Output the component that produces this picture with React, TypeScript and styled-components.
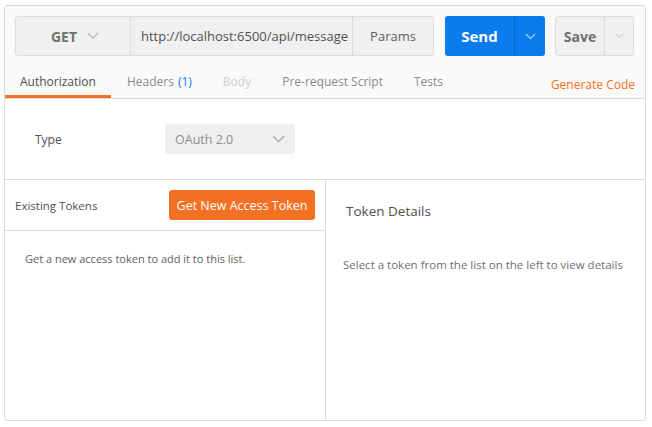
import React from 'react';
import styled, { createGlobalStyle } from 'styled-components';

const GlobalStyle = createGlobalStyle`
  html, body {
    margin: 0;
    padding: 0;
    background: #ffffff;
  }
  body {
    font-family: "Open Sans", "Liberation Sans", sans-serif;
    color: #505050;
  }
`;

const colors = {
  border: '#dcdcdc',
  panel: '#fafafa',
  field: '#f0f0f0',
  blue: '#097bed',
  blueDark: '#0a66c2',
  orange: '#f47023',
  text: '#505050',
  muted: '#808080',
};

const Chevron = ({ color, size = 12 }: { color: string; size?: number }) => (
  <svg width={size} height={size * 0.6} viewBox="0 0 12 7" fill="none">
    <path d="M1 1l5 5 5-5" stroke={color} strokeWidth="1.2" />
  </svg>
);

const tabs = [
  { label: 'Authorization', active: true },
  { label: 'Headers', count: 1 },
  { label: 'Body', disabled: true },
  { label: 'Pre-request Script' },
  { label: 'Tests' },
];

const App = (): JSX.Element => (
  <>
    <GlobalStyle />
    <Panel>
      <Header>
        <Toolbar>
          <RequestGroup>
            <Method>
              GET <Chevron color="#b0b0b0" />
            </Method>
            <Url>http://localhost:6500/api/message</Url>
            <Params>Params</Params>
          </RequestGroup>
          <SendButton>
            <span className="label">Send</span>
            <span className="caret">
              <Chevron color="#bcd9f7" size={11} />
            </span>
          </SendButton>
          <SaveButton>
            <span className="label">Save</span>
            <span className="caret">
              <Chevron color="#b5b5b5" size={9} />
            </span>
          </SaveButton>
        </Toolbar>
        <TabBar>
          {tabs.map((tab) => (
            <Tab key={tab.label} $active={tab.active} $disabled={tab.disabled}>
              {tab.label}
              {tab.count !== undefined && <Count>({tab.count})</Count>}
            </Tab>
          ))}
          <GenerateCode>Generate Code</GenerateCode>
        </TabBar>
      </Header>
      <TypeRow>
        <TypeLabel>Type</TypeLabel>
        <Select>
          OAuth 2.0 <Chevron color="#a8a8a8" size={13} />
        </Select>
      </TypeRow>
      <Columns>
        <TokenList>
          <ListHeader>
            <span>Existing Tokens</span>
            <OrangeButton>Get New Access Token</OrangeButton>
          </ListHeader>
          <EmptyNote>Get a new access token to add it to this list.</EmptyNote>
        </TokenList>
        <Details>
          <DetailsTitle>Token Details</DetailsTitle>
          <DetailsNote>Select a token from the list on the left to view details</DetailsNote>
        </Details>
      </Columns>
    </Panel>
  </>
);

const Panel = styled.div`
  margin: 5px 0 0 4px;
  width: 642px;
  height: 416px;
  box-sizing: border-box;
  border: 1px solid ${colors.border};
  border-radius: 3px;
  overflow: hidden;
  display: flex;
  flex-direction: column;
  background: #fff;
`;

const Header = styled.div`
  background: ${colors.panel};
  border-bottom: 1px solid ${colors.border};
  padding-top: 10px;
`;

const Toolbar = styled.div`
  display: flex;
  height: 40px;
  padding: 0 10px;
`;

const RequestGroup = styled.div`
  display: flex;
  border: 1px solid ${colors.border};
  border-radius: 3px;
  background: ${colors.field};
  box-sizing: border-box;
  width: 419px;
  font-size: 13px;
`;

const Method = styled.div`
  width: 115px;
  display: flex;
  align-items: center;
  justify-content: center;
  gap: 10px;
  font-weight: 700;
  font-size: 14px;
  color: #707070;
  border-right: 1px solid ${colors.border};
  padding-left: 4px;
  box-sizing: border-box;
`;

const Url = styled.div`
  flex: 1;
  display: flex;
  align-items: center;
  padding-left: 10px;
  color: #505050;
  border-right: 1px solid ${colors.border};
  white-space: nowrap;
  overflow: hidden;
`;

const Params = styled.div`
  width: 80px;
  display: flex;
  align-items: center;
  justify-content: center;
  color: #606060;
`;

const SplitButton = styled.div`
  display: flex;
  box-sizing: border-box;
  border-radius: 3px;
  height: 40px;

  .label {
    display: flex;
    align-items: center;
    justify-content: center;
    font-weight: 700;
  }

  .caret {
    display: flex;
    align-items: center;
    justify-content: center;
    flex: 1;
  }
`;

const SendButton = styled(SplitButton)`
  margin-left: 11px;
  width: 100px;
  background: ${colors.blue};
  color: #fff;
  font-size: 15px;

  .label {
    width: 69px;
    border-right: 1px solid ${colors.blueDark};
  }
`;

const SaveButton = styled(SplitButton)`
  margin-left: 10px;
  width: 79px;
  background: ${colors.field};
  border: 1px solid ${colors.border};
  color: #707070;
  font-size: 14px;

  .label {
    width: 48px;
    border-right: 1px solid ${colors.border};
  }
`;

const TabBar = styled.div`
  display: flex;
  align-items: stretch;
  height: 32px;
  margin-top: 10px;
  font-size: 12px;
`;

const Tab = styled.div<{ $active?: boolean; $disabled?: boolean }>`
  display: flex;
  align-items: center;
  padding: 1px 15px 0;
  margin-right: 1px;
  border-bottom: 3px solid ${(p) => (p.$active ? colors.orange : 'transparent')};
  color: ${(p) => (p.$active ? '#505050' : p.$disabled ? '#cfcfcf' : '#8a8a8a')};
  white-space: pre;
`;

const Count = styled.span`
  color: ${colors.blue};
  margin-left: 4px;
`;

const GenerateCode = styled.div`
  margin-left: auto;
  padding: 4px 10px 0 0;
  display: flex;
  align-items: center;
  color: ${colors.orange};
  font-size: 12px;
`;

const TypeRow = styled.div`
  display: flex;
  align-items: center;
  height: 80px;
  padding-left: 30px;
  border-bottom: 1px solid ${colors.border};
  flex-shrink: 0;
`;

const TypeLabel = styled.div`
  width: 130px;
  font-size: 12px;
  color: #505050;
`;

const Select = styled.div`
  width: 130px;
  height: 30px;
  box-sizing: border-box;
  border-radius: 3px;
  background: #efefef;
  display: flex;
  align-items: center;
  justify-content: space-between;
  padding: 0 10px;
  font-size: 12.5px;
  color: #8c8c8c;
`;

const Columns = styled.div`
  display: flex;
  flex: 1;
`;

const TokenList = styled.div`
  width: 321px;
  box-sizing: border-box;
  border-right: 1px solid ${colors.border};
`;

const ListHeader = styled.div`
  height: 51px;
  box-sizing: border-box;
  border-bottom: 1px solid ${colors.border};
  display: flex;
  align-items: center;
  justify-content: space-between;
  padding: 0 10px;
  font-size: 11.5px;
  color: #505050;
`;

const OrangeButton = styled.div`
  width: 146px;
  height: 30px;
  border-radius: 3px;
  background: ${colors.orange};
  color: #fff;
  font-size: 12.5px;
  font-weight: 400;
  display: flex;
  align-items: center;
  justify-content: center;
`;

const EmptyNote = styled.div`
  padding: 20px 20px;
  font-size: 11px;
  color: #606060;
`;

const Details = styled.div`
  flex: 1;
  padding: 0 17px;
`;

const DetailsTitle = styled.div`
  font-size: 13.5px;
  color: #505050;
  margin-top: 22px;
  padding-left: 3px;
`;

const DetailsNote = styled.div`
  font-size: 11.5px;
  color: #707070;
  margin-top: 37px;
`;

export default App;
